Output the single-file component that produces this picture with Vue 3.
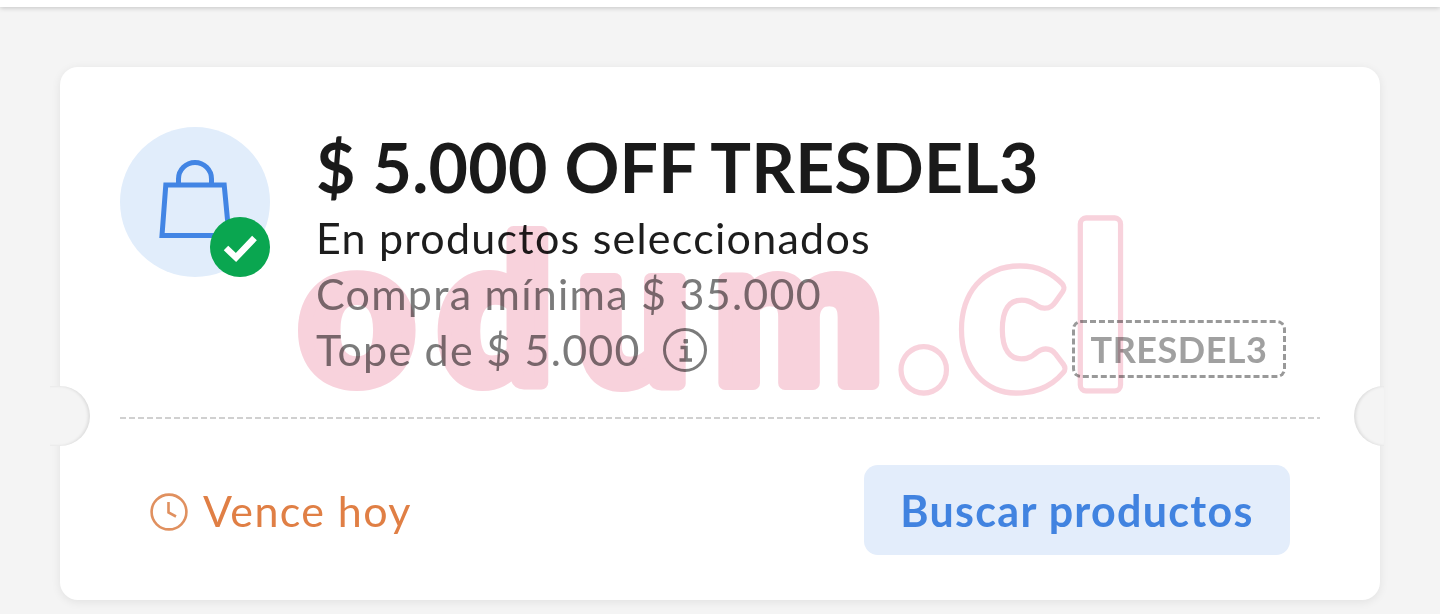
<template>
  <div class="page">
    <div class="topbar"></div>
    <div class="card">
      <span class="notch left"></span>
      <span class="notch right"></span>
      <div class="main">
        <div class="avatar">
          <svg class="bag" viewBox="0 0 72 80" width="72" height="80" fill="none" stroke="#4285e4" stroke-width="5">
            <path d="M6.8 25H65.2L70 75.4H3Z" />
            <path d="M19.5 25V19C19.5 9.9 26.9 2.5 36 2.5S52.5 9.9 52.5 19V25" />
          </svg>
          <span class="badge">
            <svg viewBox="0 0 60 60" width="60" height="60" fill="none" stroke="#fff" stroke-width="6.5">
              <path d="M16 31L26 40.5L44.5 21" />
            </svg>
          </span>
        </div>
        <div class="info">
          <h1 class="title">$ 5.000 OFF TRESDEL3</h1>
          <div class="line dark">En productos seleccionados</div>
          <div class="line">Compra mínima $ 35.000</div>
          <div class="bottom">
            <div class="line tope">
              Tope de $ 5.000
              <svg viewBox="0 0 44 44" width="44" height="44" fill="none" stroke="#7b7b7b">
                <circle cx="22" cy="22" r="20.5" stroke-width="3" />
                <path d="M17.5 19.5H23V32M16.5 32H29" stroke-width="3.6" />
                <path d="M21 11.5H24.5V15H21Z" fill="#7b7b7b" stroke-width="1" />
              </svg>
            </div>
            <div class="code">TRESDEL3</div>
          </div>
        </div>
      </div>
      <div class="divider"></div>
      <div class="footer">
        <div class="expire">
          <svg viewBox="0 0 38 38" width="38" height="38" fill="none" stroke="#e0905f" stroke-width="2.6">
            <circle cx="19" cy="19" r="17.4" />
            <path d="M18.5 9V19.5L26 23.5" />
          </svg>
          <span class="expire-text">Vence hoy</span>
        </div>
        <button class="search">Buscar productos</button>
      </div>
    </div>
    <svg class="mark" width="1440" height="614" aria-hidden="true">
      <text x="299" y="383" class="solid">odum</text>
      <g transform="translate(899 385) scale(1.04 1.08)">
        <text class="rim">.cl</text>
        <text class="hole">.cl</text>
      </g>
    </svg>
  </div>
</template>

<script setup>
</script>

<style>
html, body {
  margin: 0;
  background: #f4f4f4;
}
</style>

<style scoped>
.page {
  position: relative;
  height: 614px;
  overflow: hidden;
  background: #f4f4f4;
  font-family: "Lato", "Liberation Sans", sans-serif;
}

.topbar {
  height: 7px;
  background: #fff;
  box-shadow: 0 1px 5px rgba(0, 0, 0, 0.2);
}

.card {
  position: relative;
  box-sizing: border-box;
  width: 1320px;
  height: 533px;
  margin: 60px 0 0 60px;
  background: #fff;
  border-radius: 18px;
  box-shadow: 0 2px 10px rgba(0, 0, 0, 0.08);
}

.notch {
  position: absolute;
  top: 319px;
  height: 60px;
  background: #f4f4f4;
}

.notch.left {
  left: -10px;
  width: 40px;
  border-radius: 0 30px 30px 0;
  box-shadow: inset -2px 0 3px rgba(0, 0, 0, 0.09);
}

.notch.right {
  right: -4px;
  width: 30px;
  border-radius: 30px 0 0 30px;
  box-shadow: inset 2px 0 3px rgba(0, 0, 0, 0.09);
}

.main {
  display: flex;
  height: 320px;
  box-sizing: border-box;
  padding: 60px 94px 0 60px;
}

.avatar {
  position: relative;
  flex: none;
  width: 150px;
  height: 150px;
  border-radius: 50%;
  background: #e1edfb;
  display: flex;
  align-items: center;
  justify-content: center;
}

.bag {
  margin-top: -4px;
}

.badge {
  position: absolute;
  right: 0;
  bottom: 0;
  width: 60px;
  height: 60px;
  border-radius: 50%;
  background: #0aa650;
}

.badge svg {
  display: block;
}

.info {
  flex: 1;
  margin-left: 46px;
}

.title {
  margin: 0;
  height: 83px;
  color: #1a1a1a;
  font-size: 68px;
  line-height: 80px;
  font-weight: 700;
  letter-spacing: 0.25px;
}

.line {
  height: 56px;
  color: #7b7b7b;
  font-size: 43px;
  line-height: 56px;
  letter-spacing: 1.25px;
}

.line.dark {
  color: #1d1d1d;
}

.bottom {
  display: flex;
  align-items: center;
  justify-content: space-between;
}

.tope {
  display: flex;
  align-items: center;
  gap: 22px;
}

.code {
  box-sizing: border-box;
  width: 214px;
  height: 58px;
  margin-top: -2px;
  border: 3px dashed #999;
  border-radius: 9px;
  color: #a0a0a0;
  font-size: 36px;
  font-weight: 700;
  line-height: 52px;
  letter-spacing: 0.5px;
  text-align: center;
}

.divider {
  height: 2px;
  margin: 30px 60px 0;
  background: repeating-linear-gradient(90deg, #d0d0d0 0 6px, transparent 6px 9px);
}

.footer {
  display: flex;
  align-items: center;
  justify-content: space-between;
  padding: 46px 90px 0;
}

.expire {
  display: flex;
  align-items: center;
  gap: 15px;
  margin-top: 4px;
  color: #e07f45;
  font-size: 43px;
  letter-spacing: 1.4px;
}

.expire-text {
  margin-top: -4px;
}

.search {
  width: 426px;
  height: 90px;
  padding: 0;
  border: 0;
  border-radius: 14px;
  background: #e3edfb;
  color: #4183e0;
  font-family: inherit;
  font-size: 43px;
  font-weight: 700;
  letter-spacing: 1.3px;
}

.mark {
  position: absolute;
  left: 0;
  top: 0;
  mix-blend-mode: multiply;
  pointer-events: none;
}

.mark text {
  font-family: "Lato", sans-serif;
  font-size: 200px;
  font-weight: 900;
  stroke-linejoin: round;
}

.solid {
  fill: #f8d2dc;
  stroke: #f8d2dc;
  stroke-width: 14px;
  letter-spacing: 24px;
}

.rim {
  fill: #f8d2dc;
  stroke: #f8d2dc;
  stroke-width: 16px;
  letter-spacing: 12px;
}

.hole {
  fill: #fff;
  stroke: #fff;
  stroke-width: 6px;
  letter-spacing: 12px;
}
</style>
